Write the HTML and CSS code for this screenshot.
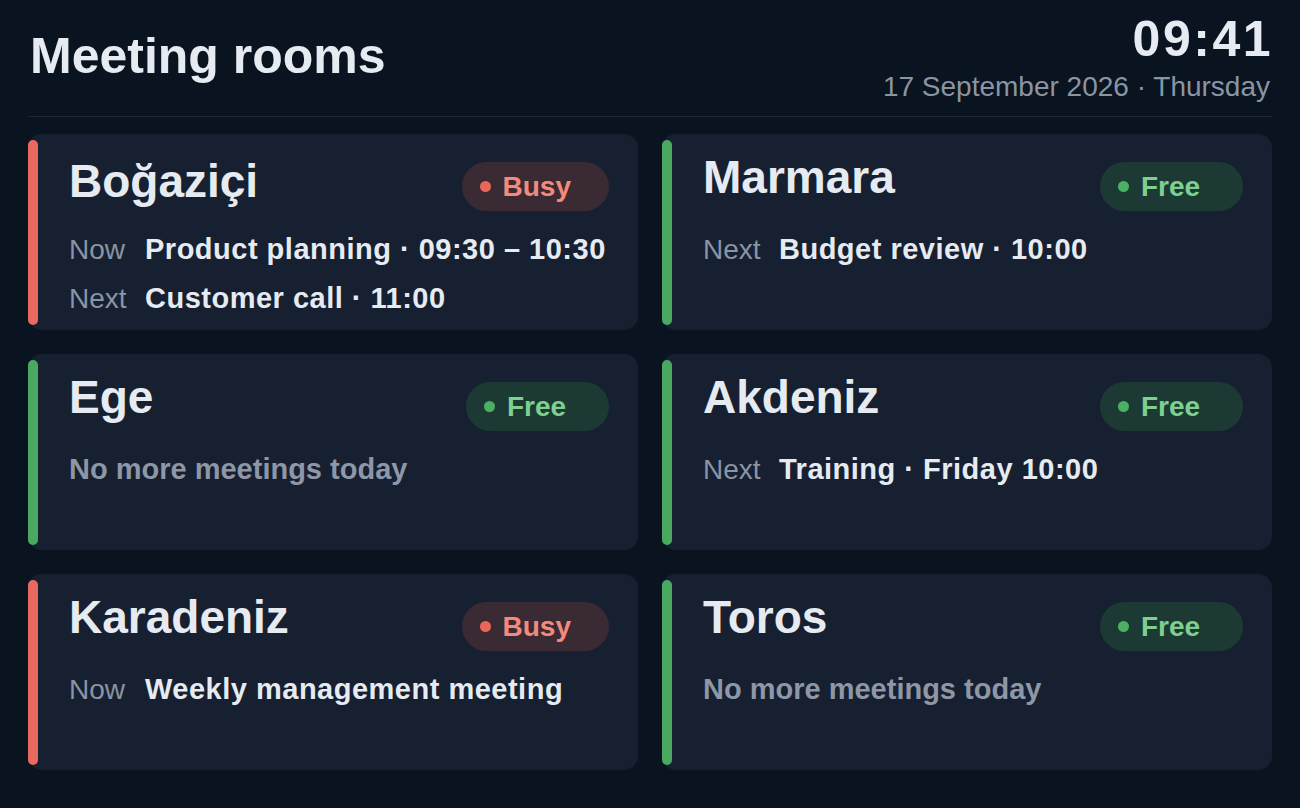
FILE: index.html
```html
<!DOCTYPE html>
<html lang="en">
<head>
<meta charset="utf-8">
<title>Meeting rooms</title>
<link rel="stylesheet" href="styles.css">
</head>
<body>
<header class="top">
  <h1 class="title">Meeting rooms</h1>
  <div class="clock">
    <div class="clock-time">09:41</div>
    <div class="clock-date">17 September 2026 · Thursday</div>
  </div>
</header>

<main class="rooms">
  <section class="room room--busy">
    <div class="room-body">
      <div class="room-head">
        <h2 class="room-name room-name--low">Boğaziçi</h2>
        <span class="badge badge--busy"><span class="badge-dot"></span>Busy</span>
      </div>
      <dl class="room-info">
        <dt>Now</dt><dd>Product planning · 09:30 – 10:30</dd>
        <dt>Next</dt><dd>Customer call · 11:00</dd>
      </dl>
    </div>
  </section>

  <section class="room room--free">
    <div class="room-body">
      <div class="room-head">
        <h2 class="room-name">Marmara</h2>
        <span class="badge badge--free"><span class="badge-dot"></span>Free</span>
      </div>
      <dl class="room-info">
        <dt>Next</dt><dd>Budget review · 10:00</dd>
      </dl>
    </div>
  </section>

  <section class="room room--free">
    <div class="room-body">
      <div class="room-head">
        <h2 class="room-name">Ege</h2>
        <span class="badge badge--free"><span class="badge-dot"></span>Free</span>
      </div>
      <p class="room-empty">No more meetings today</p>
    </div>
  </section>

  <section class="room room--free">
    <div class="room-body">
      <div class="room-head">
        <h2 class="room-name">Akdeniz</h2>
        <span class="badge badge--free"><span class="badge-dot"></span>Free</span>
      </div>
      <dl class="room-info">
        <dt>Next</dt><dd>Training · Friday 10:00</dd>
      </dl>
    </div>
  </section>

  <section class="room room--busy">
    <div class="room-body">
      <div class="room-head">
        <h2 class="room-name">Karadeniz</h2>
        <span class="badge badge--busy"><span class="badge-dot"></span>Busy</span>
      </div>
      <dl class="room-info">
        <dt>Now</dt><dd>Weekly management meeting</dd>
      </dl>
    </div>
  </section>

  <section class="room room--free">
    <div class="room-body">
      <div class="room-head">
        <h2 class="room-name">Toros</h2>
        <span class="badge badge--free"><span class="badge-dot"></span>Free</span>
      </div>
      <p class="room-empty">No more meetings today</p>
    </div>
  </section>
</main>
</body>
</html>
```

FILE: styles.css
```css
* {
  box-sizing: border-box;
}

html,
body {
  margin: 0;
  padding: 0;
}

body {
  background: #0a1320;
  color: #e4e9f0;
  font-family: "Liberation Sans", Arial, sans-serif;
  padding: 0 28px;
  height: 808px;
  overflow: hidden;
}

/* ---------- header ---------- */
.top {
  display: flex;
  justify-content: space-between;
  align-items: flex-start;
  padding: 15px 0 11px;
  border-bottom: 1px solid #1b2534;
}

.title {
  margin: 11px 0 0 2px;
  font-size: 50px;
  line-height: 60px;
  font-weight: 700;
  color: #e6ebf2;
}

.clock {
  text-align: right;
}

.clock-time {
  font-size: 50px;
  line-height: 49px;
  font-weight: 700;
  letter-spacing: 2.5px;
  margin-right: -1px;
  color: #e6ebf2;
}

.clock-date {
  margin-top: 5px;
  margin-right: 2px;
  font-size: 28px;
  line-height: 36px;
  color: #8a95a4;
}

/* ---------- grid ---------- */
.rooms {
  margin-top: 17px;
  display: grid;
  grid-template-columns: 1fr 1fr;
  grid-template-rows: repeat(3, 196px);
  gap: 24px;
}

.room {
  display: flex;
  background: #172031;
  border-radius: 14px;
}

.room::before {
  content: "";
  flex: 0 0 10px;
  margin: 6px 0 5px;
  border-radius: 5px;
}

.room--busy::before {
  background: #e86a5e;
}

.room--free::before {
  background: #4aa860;
}

.room-body {
  flex: 1;
  min-width: 0;
  padding: 18px 29px 0 31px;
}

.room-head {
  display: flex;
  justify-content: space-between;
  align-items: flex-start;
}

.room-name {
  margin: 0;
  font-size: 46px;
  line-height: 1.1;
  font-weight: 700;
  color: #e6ebf2;
}

.room-name--low {
  padding-top: 4px;
}

/* ---------- badge ---------- */
.badge {
  margin-top: 10px;
  height: 49px;
  min-width: 143px;
  display: flex;
  align-items: center;
  gap: 12px;
  padding: 0 38px 0 18px;
  border-radius: 25px;
  font-size: 28px;
  font-weight: 700;
}

.badge-dot {
  width: 11px;
  height: 11px;
  border-radius: 50%;
}

.badge--busy {
  background: #3a2a33;
  color: #f38a7c;
}

.badge--busy .badge-dot {
  background: #e8675b;
}

.badge--free {
  background: #1c3934;
  color: #7ed08e;
}

.badge--free .badge-dot {
  background: #4cb064;
}

/* ---------- info ---------- */
.room-info {
  margin: 14px 0 0;
  display: grid;
  grid-template-columns: 76px 1fr;
  align-items: baseline;
  line-height: 48px;
}

.room-info dt {
  font-size: 28px;
  color: #8a94a3;
}

.room-info dd {
  margin: 0;
  font-size: 29px;
  letter-spacing: 0.5px;
  font-weight: 700;
  color: #e6ebf2;
  white-space: nowrap;
}

.room-empty {
  margin: 14px 0 0;
  font-size: 29px;
  line-height: 48px;
  font-weight: 700;
  color: #8d97a6;
}
```
